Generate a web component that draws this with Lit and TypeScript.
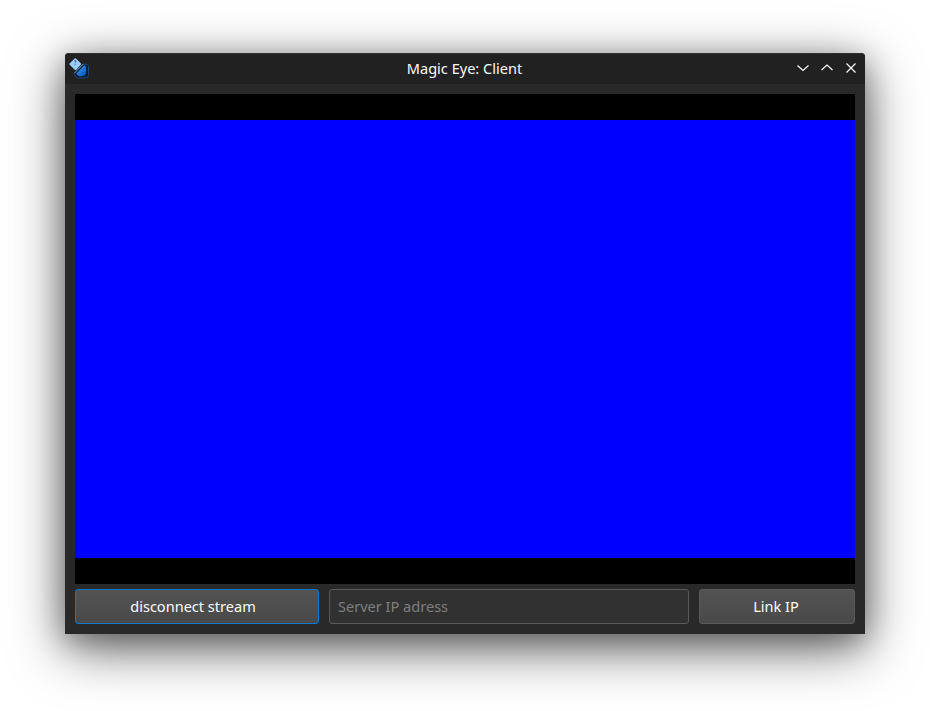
import { LitElement, html, css } from "lit";
import { customElement } from "lit/decorators.js";

@customElement("app-root")
export class AppRoot extends LitElement {
  static styles = css`
    :host {
      display: block;
      box-sizing: border-box;
      width: 100%;
      height: 100vh;
      padding: 53px 65px 77px;
      background: #fff;
      overflow: hidden;
      font-family: "Noto Sans", sans-serif;
      font-size: 14.55px;
      color: #fcfcfc;
    }
    * { box-sizing: border-box; }
    .window {
      height: 581px;
      display: flex;
      flex-direction: column;
      background: #292929;
      border-radius: 4px 4px 0 0;
      box-shadow: 0 14px 54px rgba(0, 0, 0, 0.6), 0 7px 28px rgba(0, 0, 0, 0.27);
    }
    .titlebar {
      height: 31px;
      flex: none;
      display: grid;
      grid-template-columns: 84px 1fr 84px;
      align-items: center;
      background: #212121;
      border-top: 1px solid #303030;
      border-radius: 4px 4px 0 0;
    }
    .title { text-align: center; line-height: 20px; font-size: 14.55px; padding: 0 1px 2px 0; }
    .app-icon { display: block; margin-left: 3px; }
    .controls { display: flex; gap: 8px; justify-content: flex-end; padding: 0 6px 2px 0; }
    .controls svg { display: block; }
    .content { flex: 1; display: flex; flex-direction: column; gap: 5px; padding: 10px; }
    .video { height: 490px; background: #000; padding: 26px 0; }
    .frame { height: 438px; background: #00f; }
    .row { display: grid; grid-template-columns: 244px 360px 156px; gap: 10px; height: 35px; }
    button, input {
      height: 35px;
      margin: 0;
      font: inherit;
      color: inherit;
      border: 1px solid #5a5a5a;
      border-radius: 3px;
      outline: none;
    }
    button { padding: 0 2px 1px 0; background: linear-gradient(#535353, #494949); }
    .primary { border-color: #0f76c9; padding-right: 8px; }
    input { width: 100%; padding: 0 8px 1px; background: #313131; }
    input::placeholder { color: #7f7f7f; opacity: 1; }
  `;

  private control(path: string) {
    return html`<svg width="16" height="16" viewBox="0 0 16 16" fill="none" stroke="#fcfcfc" stroke-width="1.2"><path d=${path} /></svg>`;
  }

  render() {
    return html`
      <div class="window">
        <div class="titlebar">
          <svg class="app-icon" width="24" height="24" viewBox="0 -0.5 24 24">
            <defs>
              <linearGradient id="body" x1="0" y1="0" x2="1" y2="1">
                <stop offset="0.2" stop-color="#419df0" />
                <stop offset="0.55" stop-color="#1677d8" />
                <stop offset="1" stop-color="#0751a5" />
              </linearGradient>
            </defs>
            <path d="M15 6.6h2.6q2.9 0 2.9 2.9v7.6q0 3.4-3.4 3.4h-6.6q-3.4 0-3.7-3.2L6.2 15.6z" fill="#09192b" stroke="#174a7d" stroke-width="1" />
            <path d="M6.3 15.8 15.2 6.5" stroke="#5ba0de" stroke-width="1" fill="none" />
            <path d="M16.6 7.6q1.6 1.6 1.6 4.2v2.8q0 3.9-4.2 4.1-4.8.2-5.6-2.8z" fill="url(#body)" />
            <path d="M6.4 1.2Q7.3.4 8.2 1.2L12.8 5.8Q13.4 6.5 12.8 7.2L8.4 12Q7.4 13 6.5 12L1.7 7.3Q1.1 6.5 1.8 5.8z" fill="#9bcdf9" />
            <path d="M6.1 3.4 7.9 3.2 7.8 5.2M7.1 6.2v1.2" stroke="#3d658c" stroke-width="1" fill="none" />
          </svg>
          <div class="title">Magic Eye: Client</div>
          <div class="controls">
            ${this.control("M2.5 5.5 8 10.5 13.5 5.5")}
            ${this.control("M2.5 10 8 5 13.5 10")}
            ${this.control("M3.5 3.5 12.5 12.5M12.5 3.5 3.5 12.5")}
          </div>
        </div>
        <div class="content">
          <div class="video"><div class="frame"></div></div>
          <div class="row">
            <button class="primary">disconnect stream</button>
            <input placeholder="Server IP adress" />
            <button>Link IP</button>
          </div>
        </div>
      </div>
    `;
  }
}
